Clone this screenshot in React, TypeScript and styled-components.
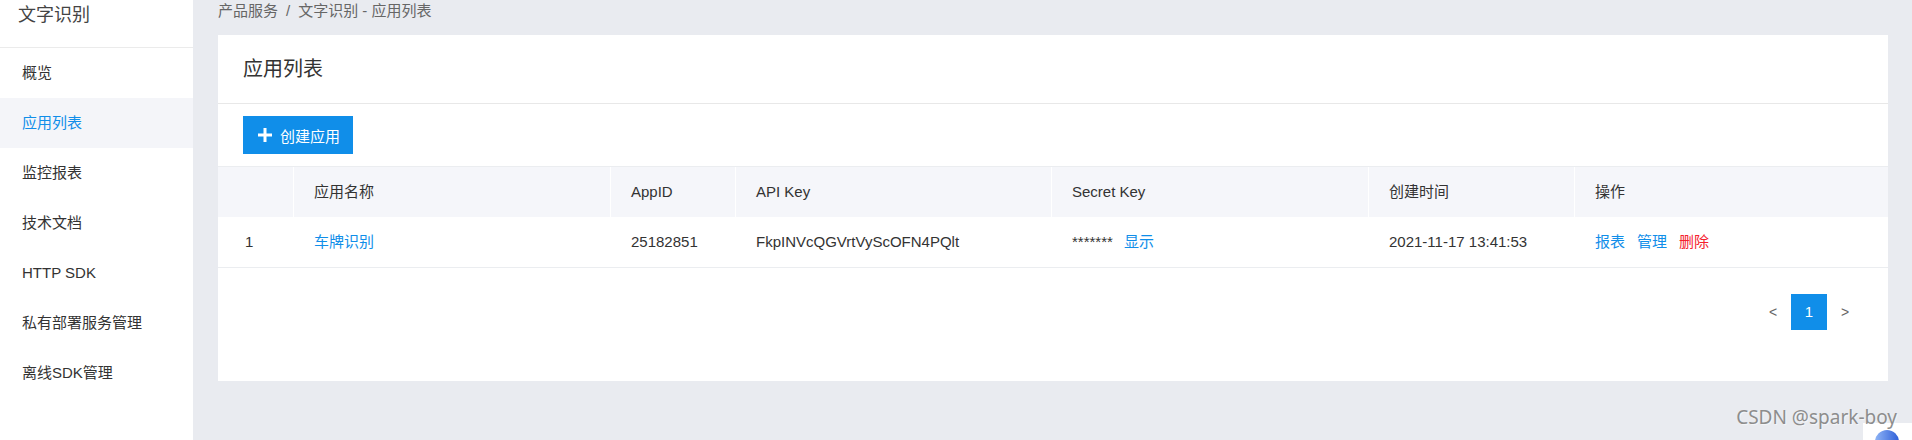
import styled, { createGlobalStyle } from "styled-components";

const GlobalStyle = createGlobalStyle`
    body {
        margin: 0;
        font-family: "Liberation Sans", "Noto Sans CJK SC", sans-serif;
        color: #333;
    }
`;

const Page = styled.div`
    position: relative;
    display: flex;
    height: 440px;
    background: #e9ebf0;
    overflow: hidden;
`;

const Sidebar = styled.aside`
    width: 193px;
    flex-shrink: 0;
    background: #fff;
`;

const SideTitle = styled.div`
    height: 47px;
    line-height: 31px;
    padding-left: 18px;
    font-size: 18px;
    color: #444;
    border-bottom: 1px solid #ebebeb;
`;

const MenuItem = styled.div<{ $active?: boolean }>`
    height: 50px;
    line-height: 50px;
    padding-left: 22px;
    font-size: 15px;
    color: ${(p) => (p.$active ? "#108ee9" : "#333")};
    background: ${(p) => (p.$active ? "#f4f5f9" : "#fff")};
`;

const Main = styled.main`
    flex: 1;
    padding: 0 24px 0 25px;
`;

const Breadcrumb = styled.div`
    height: 22px;
    line-height: 22px;
    margin-bottom: 13px;
    font-size: 15px;
    color: #666;
`;

const Sep = styled.span`
    margin: 0 8px;
`;

const Card = styled.section`
    background: #fff;
`;

const CardHead = styled.div`
    height: 68px;
    line-height: 68px;
    padding-left: 25px;
    font-size: 20px;
    color: #333;
    border-bottom: 1px solid #e8e8e8;
`;

const Toolbar = styled.div`
    padding: 12px 25px;
`;

const CreateButton = styled.button`
    display: flex;
    align-items: center;
    gap: 8px;
    height: 38px;
    padding: 0 13px 0 15px;
    border: none;
    background: #108ee9;
    color: #fff;
    font-family: inherit;
    font-size: 15px;
`;

const Grid = styled.div`
    display: grid;
    grid-template-columns: 75px 317px 125px 316px 317px 206px 1fr;
    border-top: 1px solid #ebedf0;
`;

const HeadCell = styled.div<{ $first?: boolean }>`
    height: 50px;
    line-height: 50px;
    padding-left: ${(p) => (p.$first ? "27px" : "20px")};
    background: #f5f6fa;
    border-left: ${(p) => (p.$first ? "none" : "1px solid #fff")};
    font-size: 15px;
    color: #333;
`;

const Cell = styled.div<{ $first?: boolean }>`
    height: 50px;
    line-height: 50px;
    padding-left: ${(p) => (p.$first ? "27px" : "21px")};
    border-bottom: 1px solid #ebedf0;
    font-size: 15px;
    color: #333;
    white-space: nowrap;
`;

const TextLink = styled.a<{ $danger?: boolean }>`
    color: ${(p) => (p.$danger ? "#f5222d" : "#108ee9")};
    text-decoration: none;
    margin-right: 12px;
`;

const ShowLink = styled(TextLink)`
    margin-left: 11px;
`;

const Pager = styled.div`
    display: flex;
    justify-content: flex-end;
    padding: 26px 25px 51px;
`;

const PageItem = styled.div<{ $current?: boolean }>`
    width: 36px;
    height: 36px;
    line-height: 36px;
    text-align: center;
    font-size: ${(p) => (p.$current ? "15px" : "14px")};
    color: ${(p) => (p.$current ? "#fff" : "#666")};
    background: ${(p) => (p.$current ? "#108ee9" : "transparent")};
`;

const CornerBadge = styled.div`
    position: absolute;
    right: 0;
    bottom: 0;
    width: 49px;
    height: 17px;
    background: #fff;
    overflow: hidden;
`;

const Watermark = styled.div`
    position: absolute;
    right: 15px;
    bottom: 10px;
    font-family: "Noto Sans", sans-serif;
    font-size: 19px;
    color: #8d8d8d;
    text-shadow: 1px 1px 1px rgba(255, 255, 255, 0.6);
`;

const menu = ["概览", "应用列表", "监控报表", "技术文档", "HTTP SDK", "私有部署服务管理", "离线SDK管理"];
const heads = ["", "应用名称", "AppID", "API Key", "Secret Key", "创建时间", "操作"];

export default function App() {
    return (
        <Page>
            <GlobalStyle />
            <Sidebar>
                <SideTitle>文字识别</SideTitle>
                {menu.map((m) => (
                    <MenuItem key={m} $active={m === "应用列表"}>
                        {m}
                    </MenuItem>
                ))}
            </Sidebar>
            <Main>
                <Breadcrumb>
                    产品服务<Sep>/</Sep>文字识别 - 应用列表
                </Breadcrumb>
                <Card>
                    <CardHead>应用列表</CardHead>
                    <Toolbar>
                        <CreateButton>
                            <svg width="14" height="14" viewBox="0 0 14 14">
                                <path d="M7 0v14M0 7h14" stroke="#fff" strokeWidth="3" />
                            </svg>
                            创建应用
                        </CreateButton>
                    </Toolbar>
                    <Grid>
                        {heads.map((h, i) => (
                            <HeadCell key={i} $first={i === 0}>
                                {h}
                            </HeadCell>
                        ))}
                        <Cell $first>1</Cell>
                        <Cell>
                            <TextLink>车牌识别</TextLink>
                        </Cell>
                        <Cell>25182851</Cell>
                        <Cell>FkpINVcQGVrtVyScOFN4PQlt</Cell>
                        <Cell>
                            *******<ShowLink>显示</ShowLink>
                        </Cell>
                        <Cell>2021-11-17 13:41:53</Cell>
                        <Cell>
                            <TextLink>报表</TextLink>
                            <TextLink>管理</TextLink>
                            <TextLink $danger>删除</TextLink>
                        </Cell>
                    </Grid>
                    <Pager>
                        <PageItem>&lt;</PageItem>
                        <PageItem $current>1</PageItem>
                        <PageItem>&gt;</PageItem>
                    </Pager>
                </Card>
            </Main>
            <CornerBadge>
                <svg width="49" height="17" viewBox="0 0 49 17">
                    <defs>
                        <linearGradient id="bg" x1="0" y1="0" x2="1" y2="0">
                            <stop offset="0" stopColor="#8fb4f5" />
                            <stop offset="1" stopColor="#2f5fd8" />
                        </linearGradient>
                    </defs>
                    <circle cx="24" cy="19" r="12" fill="url(#bg)" />
                </svg>
            </CornerBadge>
            <Watermark>CSDN @spark-boy</Watermark>
        </Page>
    );
}
